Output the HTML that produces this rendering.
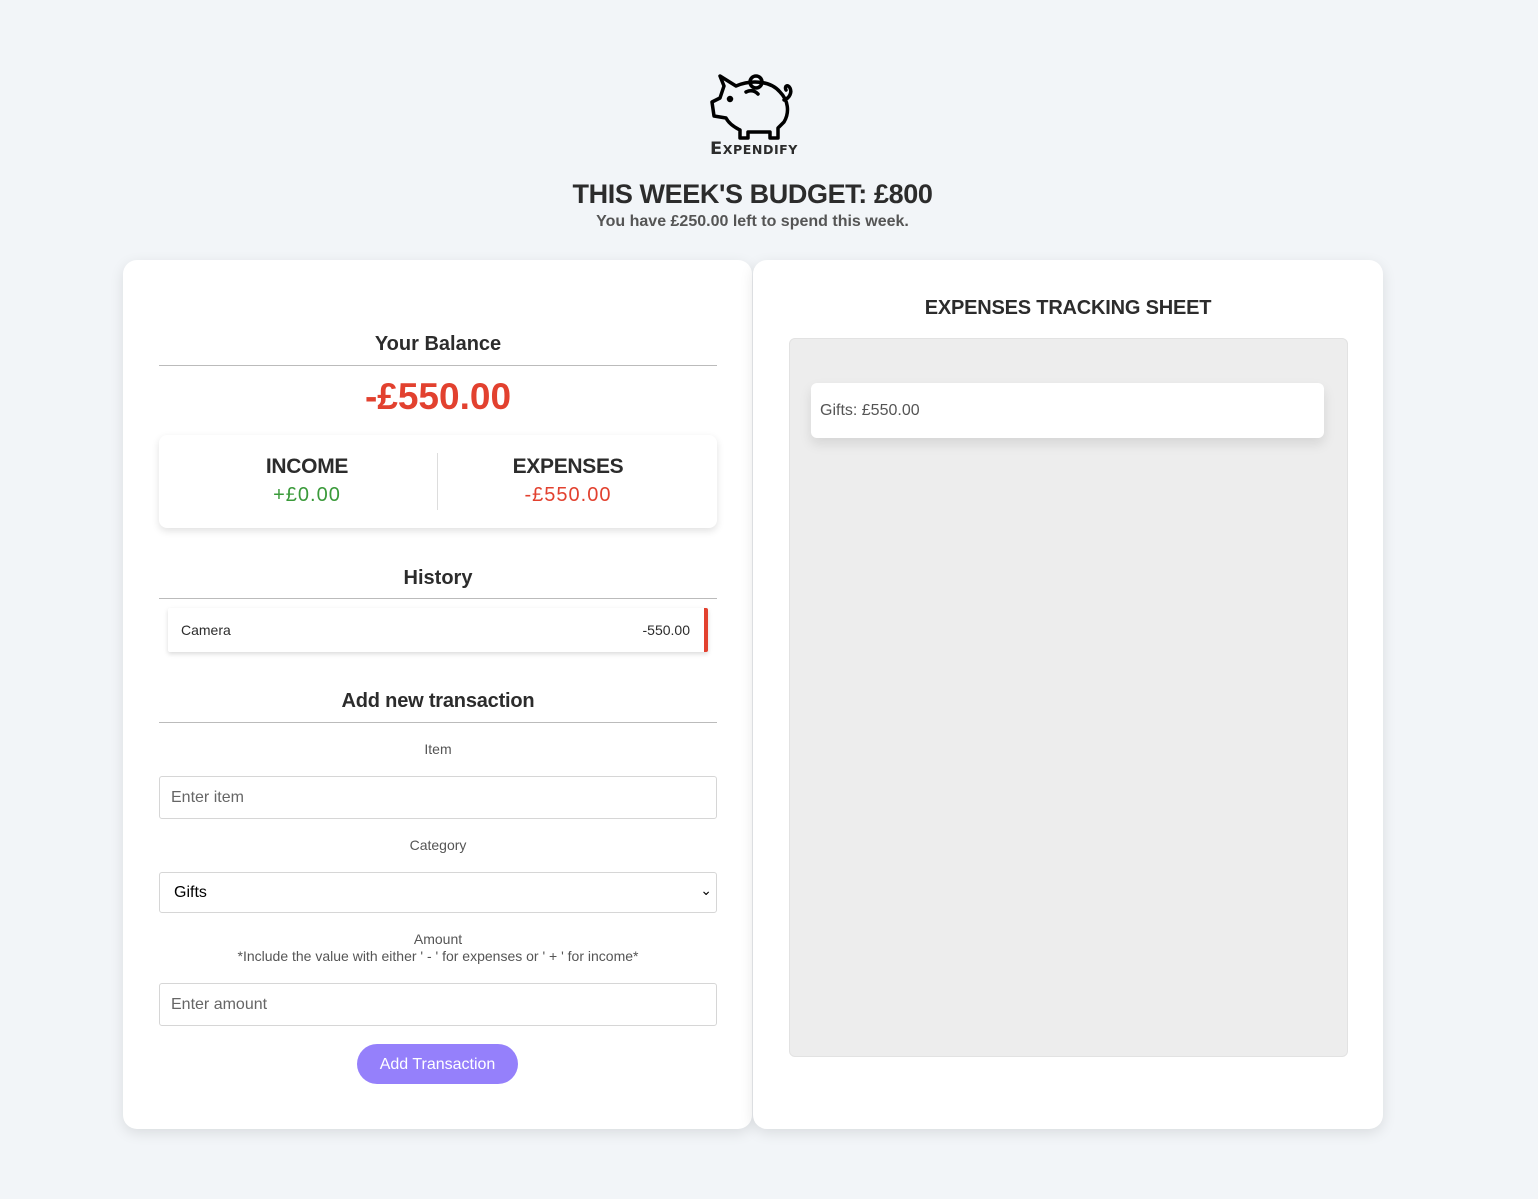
<!DOCTYPE html>
<html><head><meta charset="utf-8"><style>
*{box-sizing:border-box;margin:0;padding:0}
body{width:1538px;height:1199px;background:#f2f5f8;font-family:"Liberation Sans",sans-serif;color:#2c2c2c;position:relative;overflow:hidden}
.a{position:absolute}
.c{text-align:center}
.card{background:#fff;border-radius:14px;box-shadow:0 4px 14px rgba(0,0,0,0.1)}
.hr{height:1px;background:#bbb}
.inp{border:1px solid #d6d6d6;border-radius:3px;background:#fff;font-size:16px;color:#666;padding-left:11px;display:flex;align-items:center}
</style></head><body>
<svg class="a" style="left:706px;top:72px" width="92" height="72" viewBox="0 0 92 72" fill="none" stroke="#000" stroke-width="3.5" stroke-linejoin="round" stroke-linecap="round">
<path d="M18 14 L14 4 L30 14 C44 8 64 8 74 20 C82 28 84 40 78 50 L72 56 L72 66 L64 66 L64 60 L42 60 L42 66 L34 66 L34 58 C26 54 22 50 20 46 L8 44 L6 30 L14 26 Z"/>
<circle cx="50" cy="10" r="6"/>
<path d="M40 20 C44 18 48 18 52 22"/>
<path d="M78 28 C84 26 86 20 84 16 C82 12 78 14 80 18"/>
<circle cx="24" cy="27" r="1.5" fill="#000"/>
</svg>
<div class="a c" style="left:690px;top:139px;width:128px;font-weight:900;font-size:17px;letter-spacing:0.5px;font-variant:small-caps;font-family:'DejaVu Sans',sans-serif;transform:scaleX(1.05)">Expendify</div>
<div class="a c" style="left:0;top:179px;width:1505px;font-size:27px;font-weight:bold;letter-spacing:-0.4px">THIS WEEK'S BUDGET: £800</div>
<div class="a c" style="left:0;top:213px;width:1505px;font-size:16px;font-weight:bold;color:#555">You have £250.00 left to spend this week.</div>

<div class="a card" style="left:123px;top:260px;width:629px;height:869px"></div>
<div class="a card" style="left:753px;top:260px;width:630px;height:869px"></div>

<div class="a c" style="left:159px;top:333px;width:558px;font-size:20px;font-weight:bold">Your Balance</div>
<div class="a hr" style="left:159px;top:365px;width:558px"></div>
<div class="a c" style="left:159px;top:376px;width:558px;font-size:37px;font-weight:bold;color:#e2412f">-£550.00</div>
<div class="a card" style="left:159px;top:435px;width:558px;height:93px;border-radius:8px;box-shadow:0 3px 8px rgba(0,0,0,0.12)"></div>
<div class="a" style="left:437px;top:453px;width:1px;height:57px;background:#ddd"></div>
<div class="a c" style="left:177px;top:455px;width:260px;font-size:21px;font-weight:bold;letter-spacing:-0.3px">INCOME</div>
<div class="a c" style="left:177px;top:484px;width:260px;font-size:20px;color:#3a9a3a;letter-spacing:1px">+£0.00</div>
<div class="a c" style="left:438px;top:455px;width:260px;font-size:21px;font-weight:bold;letter-spacing:-0.3px">EXPENSES</div>
<div class="a c" style="left:438px;top:484px;width:260px;font-size:20px;color:#e2412f;letter-spacing:1px">-£550.00</div>

<div class="a c" style="left:159px;top:567px;width:558px;font-size:20px;font-weight:bold">History</div>
<div class="a hr" style="left:159px;top:598px;width:558px"></div>
<div class="a" style="left:168px;top:608px;width:540px;height:44px;background:#fff;box-shadow:0 2px 5px rgba(0,0,0,0.15);border-right:4px solid #e2412f;border-radius:2px"></div>
<div class="a" style="left:181px;top:622px;font-size:14px">Camera</div>
<div class="a" style="left:600px;top:622px;width:90px;text-align:right;font-size:14px">-550.00</div>

<div class="a c" style="left:159px;top:690px;width:558px;font-size:20px;font-weight:bold;letter-spacing:-0.2px">Add new transaction</div>
<div class="a hr" style="left:159px;top:722px;width:558px"></div>
<div class="a c" style="left:159px;top:741px;width:558px;font-size:14px;color:#555">Item</div>
<div class="a inp" style="left:159px;top:776px;width:558px;height:43px">Enter item</div>
<div class="a c" style="left:159px;top:837px;width:558px;font-size:14px;color:#555">Category</div>
<div class="a inp" style="left:159px;top:872px;width:558px;height:41px;color:#000;padding-left:14px">Gifts<span style="position:absolute;right:4px;top:9px;font-size:14px">⌄</span></div>
<div class="a c" style="left:159px;top:931px;width:558px;font-size:14px;color:#555;line-height:17px">Amount<br>*Include the value with either ' - ' for expenses or ' + ' for income*</div>
<div class="a inp" style="left:159px;top:983px;width:558px;height:43px">Enter amount</div>
<div class="a c" style="left:357px;top:1044px;width:161px;height:40px;border-radius:20px;background:#9580fb;color:#fff;font-size:16px;line-height:41px">Add Transaction</div>

<div class="a c" style="left:753px;top:297px;width:630px;font-size:20px;font-weight:bold;letter-spacing:-0.2px">EXPENSES TRACKING SHEET</div>
<div class="a" style="left:789px;top:338px;width:559px;height:719px;background:#ededed;border:1px solid #e2e2e2;border-radius:6px"></div>
<div class="a" style="left:811px;top:383px;width:513px;height:55px;background:#fff;border-radius:6px;box-shadow:0 6px 12px rgba(0,0,0,0.1);font-size:16px;color:#555;padding:19px 0 0 9px">Gifts: £550.00</div>
</body></html>
